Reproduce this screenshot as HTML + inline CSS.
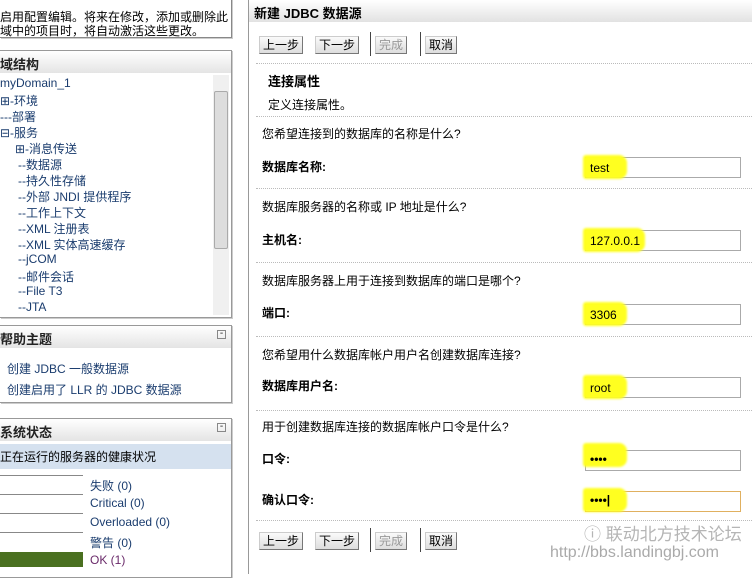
<!DOCTYPE html>
<html><head><meta charset="utf-8"><style>
*{margin:0;padding:0;box-sizing:border-box}
body{width:752px;height:574px;overflow:hidden;background:#fff;font-family:"Liberation Sans","Noto Sans CJK SC",sans-serif;font-size:12px;color:#000;position:relative}
.a{position:absolute;white-space:nowrap}
.box{position:absolute;border:1px solid #999;border-left:none;background:#fff;box-shadow:1px 1px 0 #ccc}
.hd{position:absolute;left:0;right:0;top:0;height:22px;background:linear-gradient(#fff,#e4e4e4);font-weight:bold;font-size:13px;padding:3px 0 0 0;color:#222}
.lnk{color:#1a3c6e}
.btn{position:absolute;height:18px;border:1px solid #888;border-color:#ccc #777 #777 #ccc;background:linear-gradient(#fafafa,#ddd);font-size:12px;padding:1px 3px;line-height:14px}
.sep{position:absolute;width:1px;height:24px;background:#444}
.dot{position:absolute;left:256px;right:0;border-top:1px dotted #bbb}
.lbl{position:absolute;left:262px;font-weight:bold;font-size:12px}
.inp{position:absolute;left:585px;width:156px;height:21px;border:1px solid #aaa;background:#fff}
.hl{position:absolute;left:-3px;top:-3px;height:24px;width:44px;background:#ffff20;border-radius:3px 8px 8px 3px;filter:blur(1px)}
.inp span{position:absolute;left:4px;top:3px}
.bar{position:absolute;left:0;width:83px;height:1px;background:#888}
</style></head><body>
<div class="box" style="left:0;top:-2px;width:232px;height:40px;border-color:#888">
<div class="a" style="left:0;top:9px">启用配置编辑。将来在修改，添加或删除此</div>
<div class="a" style="left:0;top:23px">域中的项目时，将自动激活这些更改。</div></div>
<div class="box" style="left:0;top:50px;width:232px;height:268px">
<div class="hd">域结构</div>
<div style="position:absolute;right:2px;top:24px;width:16px;height:240px;background:#f0f0f0"><div style="position:absolute;left:1px;right:1px;top:16px;height:158px;background:#ddd;border:1px solid #aaa;border-radius:2px"></div></div>
<div class="a lnk" style="left:0;top:25px">myDomain_1</div>
<div class="a lnk" style="left:0;top:41px">⊞-环境</div>
<div class="a lnk" style="left:0;top:57px">---部署</div>
<div class="a lnk" style="left:0;top:73px">⊟-服务</div>
<div class="a lnk" style="left:15px;top:89px">⊞-消息传送</div>
<div class="a lnk" style="left:18px;top:105px">--数据源</div>
<div class="a lnk" style="left:18px;top:121px">--持久性存储</div>
<div class="a lnk" style="left:18px;top:137px">--外部 JNDI 提供程序</div>
<div class="a lnk" style="left:18px;top:153px">--工作上下文</div>
<div class="a lnk" style="left:18px;top:169px">--XML 注册表</div>
<div class="a lnk" style="left:18px;top:185px">--XML 实体高速缓存</div>
<div class="a lnk" style="left:18px;top:201px">--jCOM</div>
<div class="a lnk" style="left:18px;top:217px">--邮件会话</div>
<div class="a lnk" style="left:18px;top:233px">--File T3</div>
<div class="a lnk" style="left:18px;top:249px">--JTA</div>
</div>
<div class="box" style="left:0;top:325px;width:232px;height:78px">
<div class="hd">帮助主题<span style="position:absolute;right:5px;top:4px;font-weight:normal;font-size:10px;border:1px solid #888;width:9px;height:9px;line-height:6px;text-align:center">-</span></div>
<div class="a lnk" style="left:7px;top:34px">创建 JDBC 一般数据源</div>
<div class="a lnk" style="left:7px;top:55px">创建启用了 LLR 的 JDBC 数据源</div></div>
<div class="box" style="left:0;top:418px;width:232px;height:160px">
<div class="hd">系统状态<span style="position:absolute;right:5px;top:4px;font-weight:normal;font-size:10px;border:1px solid #888;width:9px;height:9px;line-height:6px;text-align:center">-</span></div>
<div style="position:absolute;left:0;right:0;top:25px;height:25px;background:#d5e1ef;padding:4px 0 0 0">正在运行的服务器的健康状况</div>
<div class="bar" style="top:56px"></div><div class="bar" style="top:75px"></div><div class="bar" style="top:94px"></div><div class="bar" style="top:113px"></div>
<div style="position:absolute;left:0;top:133px;width:83px;height:15px;background:#4a7020"></div>
<div class="a lnk" style="left:90px;top:58px">失败 (0)</div>
<div class="a lnk" style="left:90px;top:77px">Critical (0)</div>
<div class="a lnk" style="left:90px;top:96px">Overloaded (0)</div>
<div class="a lnk" style="left:90px;top:115px">警告 (0)</div>
<div class="a" style="left:90px;top:134px;color:#6a2a6a">OK (1)</div></div>
<div style="position:absolute;left:248px;top:0;width:1px;height:574px;background:#999"></div>
<div style="position:absolute;left:249px;top:0;right:0;height:22px;background:linear-gradient(#fff,#e2e2e2);font-weight:bold;font-size:13px;padding:3px 0 0 5px">新建 JDBC 数据源</div>
<div class="btn" style="left:259px;top:36px">上一步</div><div class="btn" style="left:315px;top:36px">下一步</div>
<div class="sep" style="left:370px;top:32px"></div><div class="btn" style="left:375px;top:36px;color:#999">完成</div><div class="sep" style="left:420px;top:32px"></div><div class="btn" style="left:425px;top:36px">取消</div>
<div class="dot" style="top:63px"></div>
<div class="a" style="left:268px;top:71px;font-weight:bold;font-size:13px">连接属性</div>
<div class="a" style="left:268px;top:96px">定义连接属性。</div>
<div class="dot" style="top:116px"></div>
<div class="a" style="left:262px;top:125px">您希望连接到的数据库的名称是什么?</div>
<div class="lbl" style="top:158px">数据库名称:</div><div class="inp" style="top:157px"><div class="hl"></div><span>test</span></div>
<div class="dot" style="top:188px"></div>
<div class="a" style="left:262px;top:198px">数据库服务器的名称或 IP 地址是什么?</div>
<div class="lbl" style="top:231px">主机名:</div><div class="inp" style="top:230px"><div class="hl" style="width:62px"></div><span>127.0.0.1</span></div>
<div class="dot" style="top:262px"></div>
<div class="a" style="left:262px;top:272px">数据库服务器上用于连接到数据库的端口是哪个?</div>
<div class="lbl" style="top:304px">端口:</div><div class="inp" style="top:304px"><div class="hl"></div><span>3306</span></div>
<div class="dot" style="top:336px"></div>
<div class="a" style="left:262px;top:346px">您希望用什么数据库帐户用户名创建数据库连接?</div>
<div class="lbl" style="top:377px">数据库用户名:</div><div class="inp" style="top:377px"><div class="hl"></div><span>root</span></div>
<div class="dot" style="top:410px"></div>
<div class="a" style="left:262px;top:418px">用于创建数据库连接的数据库帐户口令是什么?</div>
<div class="lbl" style="top:450px">口令:</div><div class="inp" style="top:450px"><div class="hl" style="top:-8px;height:24px"></div><span style="top:1px;font-weight:bold">••••</span></div>
<div class="lbl" style="top:491px">确认口令:</div><div class="inp" style="top:491px;border-color:#e0b060"><div class="hl" style="top:-4px"></div><span style="top:1px;font-weight:bold">••••|</span></div>
<div class="dot" style="top:520px"></div>
<div class="btn" style="left:259px;top:532px">上一步</div><div class="btn" style="left:315px;top:532px">下一步</div>
<div class="sep" style="left:370px;top:528px"></div><div class="btn" style="left:375px;top:532px;color:#999">完成</div><div class="sep" style="left:420px;top:528px"></div><div class="btn" style="left:425px;top:532px">取消</div>
<div class="a" style="left:584px;top:520px;font-size:17px;color:#b5b5b5">ⓘ 联动北方技术论坛</div>
<div class="a" style="left:550px;top:544px;font-size:16px;color:#aaa">http://bbs.landingbj.com</div>
</body></html>
